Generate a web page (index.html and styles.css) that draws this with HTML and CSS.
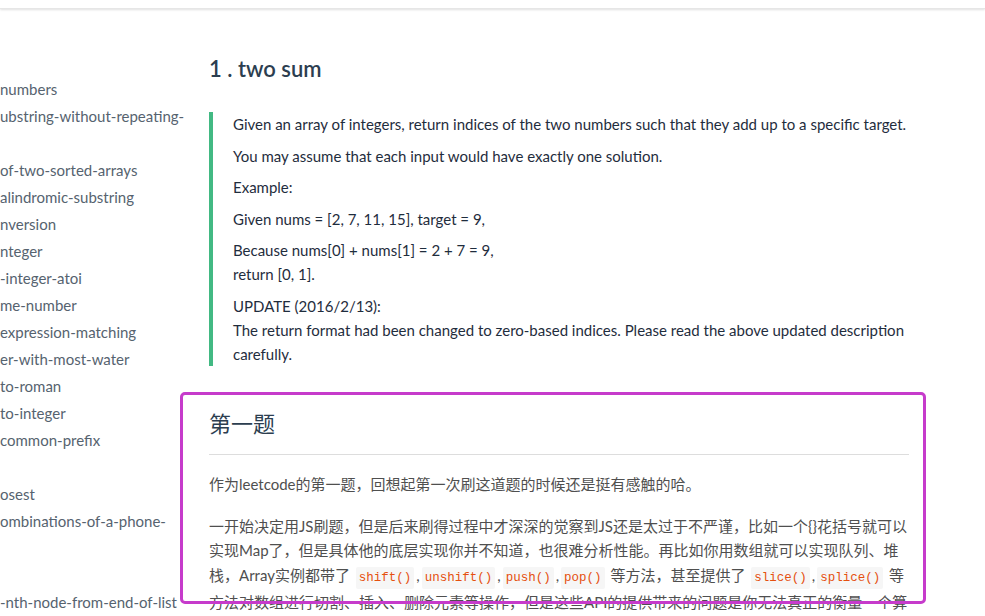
FILE: index.html
```html
<!DOCTYPE html>
<html lang="zh-CN">
<head>
<meta charset="utf-8">
<title>1 . two sum</title>
<link rel="stylesheet" href="styles.css">
</head>
<body>
<header class="topbar"></header>
<div class="layout">
  <aside class="sidebar">
    <ul class="nav">
      <li>&nbsp;</li>
      <li>numbers</li>
      <li>ubstring-without-repeating-<br>&nbsp;</li>
      <li>of-two-sorted-arrays</li>
      <li>alindromic-substring</li>
      <li>nversion</li>
      <li>nteger</li>
      <li>-integer-atoi</li>
      <li>me-number</li>
      <li>expression-matching</li>
      <li>er-with-most-water</li>
      <li>to-roman</li>
      <li>to-integer</li>
      <li>common-prefix</li>
      <li>&nbsp;</li>
      <li>osest</li>
      <li>ombinations-of-a-phone-<br>&nbsp;</li>
      <li>&nbsp;</li>
      <li>-nth-node-from-end-of-list</li>
    </ul>
  </aside>
  <main class="content">
    <h2 class="title">1 . two sum</h2>
    <blockquote class="quote">
      <p>Given an array of integers, return indices of the two numbers such that they add up to a specific target.</p>
      <p>You may assume that each input would have exactly one solution.</p>
      <p>Example:</p>
      <p>Given nums = [2, 7, 11, 15], target = 9,</p>
      <p>Because nums[0] + nums[1] = 2 + 7 = 9,<br>return [0, 1].</p>
      <p>UPDATE (2016/2/13):<br>The return format had been changed to zero-based indices. Please read the above updated description carefully.</p>
    </blockquote>
    <h2 class="section-title">第一题</h2>
    <p class="text">作为leetcode的第一题，回想起第一次刷这道题的时候还是挺有感触的哈。</p>
    <p class="text">一开始决定用JS刷题，但是后来刷得过程中才深深的觉察到JS还是太过于不严谨，比如一个{}花括号就可以实现Map了，但是具体他的底层实现你并不知道，也很难分析性能。再比如你用数组就可以实现队列、堆栈，Array实例都带了 <code>shift()</code>,<code>unshift()</code>,<code>push()</code>,<code>pop()</code> 等方法，甚至提供了 <code>slice()</code>,<code>splice()</code> 等方法对数组进行切割、插入、删除元素等操作，但是这些API的提供带来的问题是你无法真正的衡量一个算法的时间复杂度和空间复杂度，所以后来决定改用其他语言来刷题。</p>
  </main>
  <div class="highlight"></div>
</div>
</body>
</html>
```
FILE: styles.css
```css
* { box-sizing: border-box; }
html, body { margin: 0; padding: 0; background: #fff; }
body {
  font-family: "Lato", "Noto Sans CJK SC", sans-serif;
  font-size: 15px;
  color: #34495e;
  overflow: hidden;
  height: 616px;
}
.topbar {
  height: 9px;
  background: #fff;
  box-shadow: 0 1px 2px rgba(0,0,0,0.12);
  border-bottom: 1px solid #e6e6e6;
}
.layout {
  position: relative;
  display: flex;
}
.sidebar {
  width: 209px;
  flex: none;
}
.nav {
  list-style: none;
  margin: 0;
  padding: 40px 0 0 0;
  color: #56636f;
  line-height: 27px;
  white-space: nowrap;
}
.content {
  width: 700px;
  flex: none;
}
.title {
  margin: 45px 0 0;
  font-size: 22px;
  line-height: 30px;
  font-weight: 600;
  color: #2c3e50;
}
.quote {
  margin: 28px 0 0;
  padding: 0 0 0 20px;
  border-left: 4px solid #42b983;
  color: #1f2d3d;
}
.quote p {
  margin: 0 0 7.5px;
  line-height: 24px;
}
.quote p:last-child { margin-bottom: 0; }
.section-title {
  margin: 43px 0 0;
  padding-bottom: 15px;
  font-size: 22px;
  line-height: 30px;
  font-weight: 400;
  color: #2c3e50;
  border-bottom: 1px solid #dddddd;
}
.text {
  margin: 17px 0 0;
  line-height: 24.4px;
  color: #4f4f4f;
}
.text + .text { margin-top: 18px; }
code {
  font-family: "Liberation Mono", "DejaVu Sans Mono", monospace;
  font-size: 12.5px;
  color: #e5500f;
  background: #f6f6f6;
  padding: 4px 3px;
  margin: 0 2px;
  border-radius: 2px;
}
.highlight {
  position: absolute;
  left: 180px;
  top: 383px;
  width: 746px;
  height: 212px;
  border: 3px solid #c63bcb;
  border-radius: 5px;
  pointer-events: none;
}
```
